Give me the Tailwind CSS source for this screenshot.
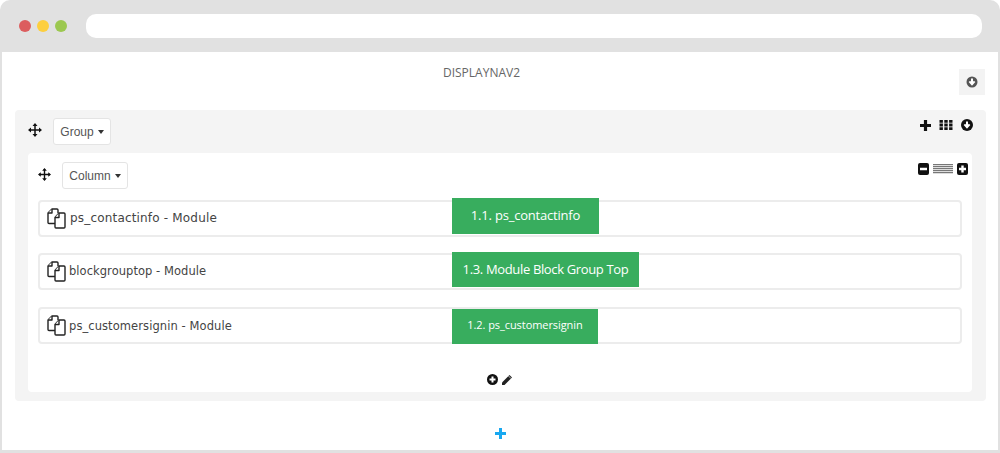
<!DOCTYPE html>
<html>
<head>
<meta charset="utf-8">
<script src="https://cdn.jsdelivr.net/npm/@tailwindcss/browser@4"></script>
</head>
<body class="bg-white">
<div class="w-[1000px] h-[453px] overflow-hidden flex flex-col bg-[#e1e1e1] rounded-t-[10px] font-['Liberation_Sans',sans-serif]">
  <div class="h-[52px] shrink-0 flex items-center pl-[19px] pr-[18px]">
    <div class="flex gap-[6px] pr-[19px]">
      <span class="w-3 h-3 rounded-full bg-[#dc5d5e]"></span>
      <span class="w-3 h-3 rounded-full bg-[#fdcf3e]"></span>
      <span class="w-3 h-3 rounded-full bg-[#9cc850]"></span>
    </div>
    <div class="flex-1 h-6 bg-white rounded-[10px]"></div>
  </div>
  <div class="mx-[2px] mb-[3px] flex-1 bg-white px-[13px] flex flex-col">
    <div class="relative h-[58px] shrink-0">
      <div class="pt-[13px] text-center pr-[37px] text-[12px] leading-[16px] text-[#666] font-['Open_Sans',sans-serif]">DISPLAYNAV2</div>
      <div class="absolute right-[0px] top-[17px] w-[26px] h-[26px] bg-[#f3f3f3] flex items-center justify-center">
        <svg width="12" height="12" viewBox="0 0 12 12"><circle cx="6" cy="6" r="5.500" fill="#555"/><path d="M6 2.600v5M3.400 5.400 6 8.200l2.600-2.800" fill="none" stroke="#fff" stroke-width="2"/></svg>
      </div>
    </div>
    <div class="w-[971px] h-[291px] bg-[#f4f4f4] rounded-[4px] pl-[13px] pr-[14px] flex flex-col">
      <div class="h-[43px] shrink-0 flex items-start justify-between">
        <div class="flex items-start pt-[8px]">
          <svg class="mt-[5px]" width="14" height="14" viewBox="0 0 14 14" fill="none" stroke="#111" stroke-width="1.500"><path d="M7 1v12M1 7h12"/><path d="M7 0 9.500 3h-5zM7 14 9.500 11h-5zM0 7 3 4.500v5zM14 7 11 4.500v5z" fill="#111" stroke="none"/></svg>
          <div class="ml-[11px] h-[27px] w-[58px] bg-white border border-[#e4e4e4] rounded-[3px] flex items-center justify-center gap-[4px] pt-[1px] text-[12px] text-[#555]">Group<span class="border-x-[3.500px] border-x-transparent border-t-[4px] border-t-[#333]"></span></div>
        </div>
        <div class="flex items-center gap-[8px] pt-[9px] -mr-[1px]">
          <svg width="11" height="11" viewBox="0 0 11 11"><path d="M5.500 0v11M0 5.500h11" stroke="#111" stroke-width="3.200"/></svg>
          <svg width="14" height="10" viewBox="0 0 13 10" fill="#111"><path d="M0 0h3.400v2.800H0zM4.800 0h3.400v2.800H4.800zM9.600 0H13v2.800H9.600zM0 3.600h3.400v2.800H0zM4.800 3.600h3.400v2.800H4.800zM9.600 3.600H13v2.800H9.600zM0 7.200h3.400V10H0zM4.800 7.200h3.400V10H4.800zM9.600 7.200H13V10H9.600z"/></svg>
          <svg width="12" height="12" viewBox="0 0 12 12"><circle cx="6" cy="6" r="6" fill="#111"/><path d="M6 2.600v5M3.400 5.400 6 8.200l2.600-2.800" fill="none" stroke="#fff" stroke-width="2"/></svg>
        </div>
      </div>
      <div class="h-[239px] bg-white rounded-[4px] px-[10px] flex flex-col">
        <div class="h-[46.500px] shrink-0 flex items-start justify-between">
          <div class="flex items-start pt-[9px]">
            <svg class="mt-[6px]" width="13" height="13" viewBox="0 0 14 14" fill="none" stroke="#111" stroke-width="1.500"><path d="M7 1v12M1 7h12"/><path d="M7 0 9.500 3h-5zM7 14 9.500 11h-5zM0 7 3 4.500v5zM14 7 11 4.500v5z" fill="#111" stroke="none"/></svg>
            <div class="ml-[11px] h-[27px] w-[66px] bg-white border border-[#e4e4e4] rounded-[3px] flex items-center justify-center gap-[4px] pt-[1px] text-[12px] text-[#555]">Column<span class="border-x-[3.500px] border-x-transparent border-t-[4px] border-t-[#333]"></span></div>
          </div>
          <div class="flex items-center gap-[4px] pt-[10px] -mr-[6px]">
            <svg width="11" height="12" viewBox="0 0 11 12"><rect width="11" height="12" rx="2" fill="#111"/><path d="M2 6h7" stroke="#fff" stroke-width="2.400"/></svg>
            <div class="w-[20px] h-[10px] bg-[repeating-linear-gradient(#777_0,#777_1px,#ddd_1px,#ddd_2px)]"></div>
            <svg width="11" height="12" viewBox="0 0 11 12"><rect width="11" height="12" rx="2" fill="#111"/><path d="M2 6h7M5.500 2.500v7" stroke="#fff" stroke-width="2.400"/></svg>
          </div>
        </div>
        <div class="flex flex-col gap-[16.500px]">
          <div class="relative h-[37px] border-2 border-[#ececec] rounded-[4px] flex items-center pl-[7px] gap-[4px] text-[12px] tracking-[0.18px] text-[#444] font-['DejaVu_Sans',sans-serif]">
            <svg width="19" height="21" viewBox="0 0 19 21" fill="#fff" stroke="#222" stroke-width="1.400" stroke-linejoin="round"><path d="M9 15.500H2a1 1 0 0 1-1-1V5l4-4h5a1 1 0 0 1 1 1v3"/><path d="M5 1v4H1"/><path d="M8 19V9.500L12 5h5a1 1 0 0 1 1 1v13a1 1 0 0 1-1 1H9a1 1 0 0 1-1-1z"/><path d="M12 5v4.500H8"/></svg>
            <span>ps_contactinfo - Module</span>
            <div class="absolute left-[412px] top-[-3.500px] w-[147px] h-[36px] bg-[#38ad5e] flex items-center justify-center text-white text-[13px] font-medium tracking-[-0.2px] font-['Open_Sans',sans-serif]">1.1. ps_contactinfo</div>
          </div>
          <div class="relative h-[37px] border-2 border-[#ececec] rounded-[4px] flex items-center pl-[7px] gap-[3px] text-[11.500px] tracking-[0.05px] text-[#444] font-['DejaVu_Sans',sans-serif]">
            <svg width="19" height="21" viewBox="0 0 19 21" fill="#fff" stroke="#222" stroke-width="1.400" stroke-linejoin="round"><path d="M9 15.500H2a1 1 0 0 1-1-1V5l4-4h5a1 1 0 0 1 1 1v3"/><path d="M5 1v4H1"/><path d="M8 19V9.500L12 5h5a1 1 0 0 1 1 1v13a1 1 0 0 1-1 1H9a1 1 0 0 1-1-1z"/><path d="M12 5v4.500H8"/></svg>
            <span>blockgrouptop - Module</span>
            <div class="absolute left-[412px] top-[-3px] w-[187px] h-[35px] bg-[#38ad5e] flex items-center justify-center text-white text-[13px] font-medium tracking-[-0.35px] font-['Open_Sans',sans-serif]">1.3. Module Block Group Top</div>
          </div>
          <div class="relative h-[37px] border-2 border-[#ececec] rounded-[4px] flex items-center pl-[7px] gap-[3px] text-[11.500px] tracking-[0.08px] text-[#444] font-['DejaVu_Sans',sans-serif]">
            <svg width="19" height="21" viewBox="0 0 19 21" fill="#fff" stroke="#222" stroke-width="1.400" stroke-linejoin="round"><path d="M9 15.500H2a1 1 0 0 1-1-1V5l4-4h5a1 1 0 0 1 1 1v3"/><path d="M5 1v4H1"/><path d="M8 19V9.500L12 5h5a1 1 0 0 1 1 1v13a1 1 0 0 1-1 1H9a1 1 0 0 1-1-1z"/><path d="M12 5v4.500H8"/></svg>
            <span class="pt-[3px]">ps_customersignin - Module</span>
            <div class="absolute left-[412px] top-[0.500px] w-[146px] h-[35px] bg-[#38ad5e] flex items-center justify-center pb-[2px] text-white text-[11px] font-medium tracking-[-0.07px] font-['Open_Sans',sans-serif]">1.2. ps_customersignin</div>
          </div>
        </div>
        <div class="flex justify-center items-center gap-[3px] pt-[30px]">
          <svg width="11" height="11" viewBox="0 0 11 11"><circle cx="5.500" cy="5.500" r="5.500" fill="#111"/><path d="M2.500 5.500h6M5.500 2.500v6" stroke="#fff" stroke-width="2"/></svg>
          <svg width="12" height="12" viewBox="0 0 12 12"><path d="M1 8.500 8.500 1 11 3.500 3.500 11H1z" fill="#222"/><path d="M7.500 2 10 4.500" stroke="#fff" stroke-width=".7"/></svg>
        </div>
      </div>
    </div>
    <div class="flex justify-center pt-[27px]">
      <svg width="11" height="11" viewBox="0 0 11 11"><path d="M5.500 0v11M0 5.500h11" stroke="#18a8f0" stroke-width="3"/></svg>
    </div>
  </div>
</div>
</body>
</html>
